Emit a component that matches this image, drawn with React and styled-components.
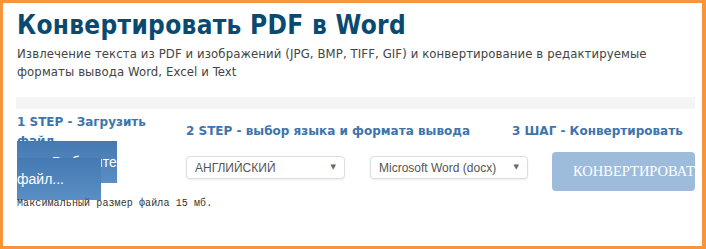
import styled, { createGlobalStyle } from "styled-components";

const GlobalStyle = createGlobalStyle`
  html, body {
    margin: 0;
    padding: 0;
    background: #ffffff;
  }
`;

const Frame = styled.div`
  box-sizing: border-box;
  width: 706px;
  height: 249px;
  border: 3px solid #f7953d;
  border-right-width: 4px;
  padding: 7px 7px 0 14px;
  overflow: hidden;
  font-family: "DejaVu Sans", Verdana, sans-serif;
`;

const Title = styled.h1`
  margin: 0;
  font-family: "DejaVu Sans Condensed", "DejaVu Sans", sans-serif;
  font-stretch: condensed;
  font-size: 26px;
  line-height: 30px;
  letter-spacing: 0.3px;
  font-weight: bold;
  color: #0b4a70;
`;

const Lead = styled.p`
  margin: 5px 0 0 0;
  font-family: "DejaVu Sans Condensed", "DejaVu Sans", sans-serif;
  font-stretch: condensed;
  font-size: 13px;
  line-height: 18px;
  letter-spacing: 0.1px;
  color: #444444;
`;

const Band = styled.div`
  margin: 16px 0 0 -1px;
  height: 12px;
  background: #f4f4f4;
`;

const Labels = styled.div`
  display: grid;
  grid-template-columns: 169px 326px 1fr;
  align-items: center;
  height: 29px;
  margin-top: 4px;
`;

const StepLabel = styled.h4`
  margin: 0;
  max-width: ${(p) => p.$max || "none"};
  font-size: 12px;
  line-height: 18.5px;
  font-weight: bold;
  color: #3d74ab;
  white-space: ${(p) => (p.$max ? "normal" : "nowrap")};
`;

const Controls = styled.div`
  display: flex;
  align-items: flex-start;
  height: 57px;
`;

const UploadCol = styled.div`
  width: 150px;
  margin: 12px 19px 0 0;
  font-family: "Liberation Sans", Arial, sans-serif;
  font-size: 14px;
  line-height: 17px;
`;

const UploadLabel = styled.span`
  padding: 13px 37px 13px 35px;
  background: linear-gradient(#4479b2, #5a8fc5);
  color: #ffffff;
`;

const SelectWrap = styled.div`
  position: relative;
  width: ${(p) => p.$w}px;
  margin: 14px ${(p) => p.$gap}px 0 0;
`;

const Select = styled.select`
  box-sizing: border-box;
  appearance: none;
  width: 100%;
  height: 23px;
  padding: 0 20px 0 8px;
  border: 1px solid #dddddd;
  border-radius: 4px;
  box-shadow: 0 1px 2px rgba(0, 0, 0, 0.08);
  background: #ffffff;
  font-family: "Liberation Sans", Arial, sans-serif;
  font-size: 12px;
  color: #555555;
`;

const Caret = styled.span`
  position: absolute;
  right: 9px;
  top: 7px;
  font-size: 7px;
  line-height: 9px;
  color: #666666;
  pointer-events: none;
`;

const ConvertButton = styled.button`
  box-sizing: border-box;
  width: 143px;
  height: 39px;
  margin-top: 10px;
  padding: 0 0 0 21px;
  border: none;
  border-radius: 4px;
  background: #9dbcdb;
  color: #ffffff;
  font-family: "Liberation Serif", "Times New Roman", serif;
  font-size: 14.5px;
  text-align: left;
  white-space: nowrap;
  overflow: hidden;
`;

const Note = styled.div`
  margin-top: -1px;
  font-family: "Liberation Mono", "Courier New", monospace;
  font-size: 10px;
  line-height: 12px;
  letter-spacing: 0.1px;
  color: #333333;
`;

export default function App() {
  return (
    <>
      <GlobalStyle />
      <Frame>
        <Title>Конвертировать PDF в Word</Title>
        <Lead>
          Извлечение текста из PDF и изображений (JPG, BMP, TIFF, GIF) и
          конвертирование в редактируемые форматы вывода Word, Excel и Text
        </Lead>
        <Band />
        <Labels>
          <StepLabel $max="150px">1 STEP - Загрузить файл</StepLabel>
          <StepLabel>2 STEP - выбор языка и формата вывода</StepLabel>
          <StepLabel>3 ШАГ - Конвертировать</StepLabel>
        </Labels>
        <Controls>
          <UploadCol>
            <UploadLabel>Выберите файл...</UploadLabel>
          </UploadCol>
          <SelectWrap $w={159} $gap={25}>
            <Select defaultValue="en">
              <option value="en">АНГЛИЙСКИЙ</option>
            </Select>
            <Caret>▼</Caret>
          </SelectWrap>
          <SelectWrap $w={158} $gap={24}>
            <Select defaultValue="docx">
              <option value="docx">Microsoft Word (docx)</option>
            </Select>
            <Caret>▼</Caret>
          </SelectWrap>
          <ConvertButton disabled>КОНВЕРТИРОВАТЬ</ConvertButton>
        </Controls>
        <Note>Максимальный размер файла 15 мб.</Note>
      </Frame>
    </>
  );
}
